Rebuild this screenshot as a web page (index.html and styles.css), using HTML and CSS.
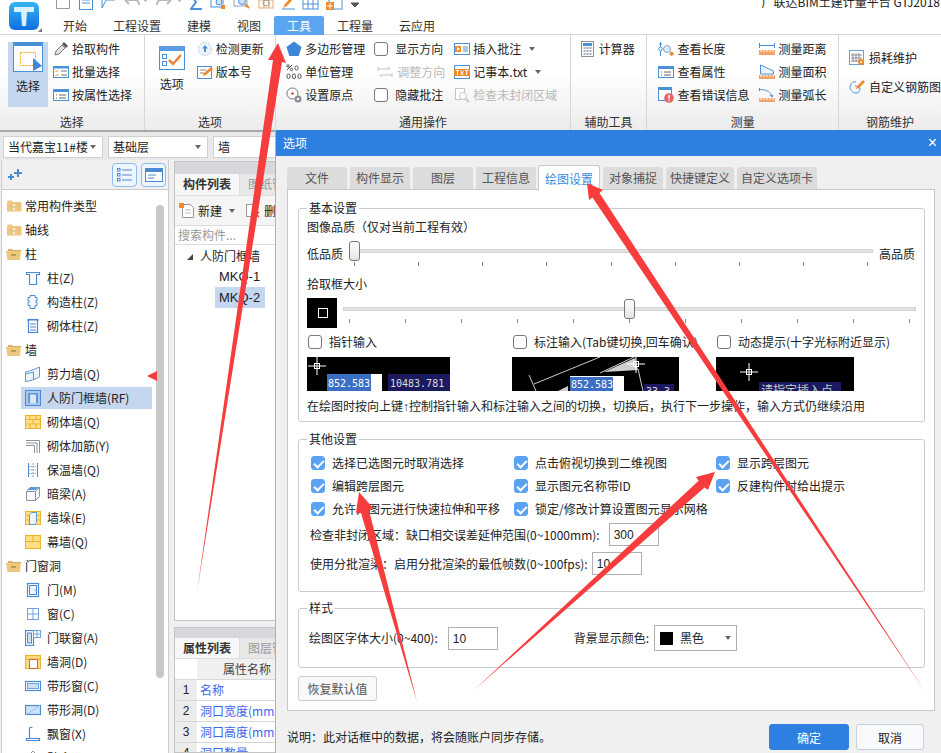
FILE: index.html
```html
<!DOCTYPE html>
<html lang="zh-CN">
<head>
    <meta charset="UTF-8">
    <title>广联达BIM土建计量平台 GTJ2018</title>
    <link rel="stylesheet" href="styles.css">
</head>
<body>
<svg class="defs" xmlns="http://www.w3.org/2000/svg">
    <defs>
        <linearGradient id="logo-g" x1="0" y1="0" x2="0" y2="1">
            <stop offset="0%" stop-color="#35b4f2"></stop>
            <stop offset="100%" stop-color="#0f6fe0"></stop>
        </linearGradient>
        <!-- 功能区小图标 -->
        <symbol id="i-pick" viewBox="0 0 16 16"><path d="M2 14l1-4 6-6 3 3-6 6z" fill="#dfe3e8" stroke="#777"/><path d="M9 3l2-2 4 4-2 2z" fill="#555"/></symbol>
        <symbol id="i-batch" viewBox="0 0 16 16"><rect x=".5" y="2.5" width="15" height="11" fill="#fff" stroke="#4a90d9"/><rect x=".5" y="2.5" width="15" height="2" fill="#4a90d9"/><path d="M2.500 7l1 1 2-2M2.500 11l1 1 2-2" fill="none" stroke="#f08a2c"/><path d="M8 7h6M8 11h6" stroke="#777"/></symbol>
        <symbol id="i-attr" viewBox="0 0 16 16"><rect x=".5" y="2.500" width="15" height="11" fill="#fff" stroke="#4a90d9"/><rect x=".5" y="2.500" width="15" height="2.500" fill="#4a90d9"/><path d="M3 8h1M3 11h1M6 8h7M6 11h7" stroke="#666"/></symbol>
        <symbol id="i-update" viewBox="0 0 16 16"><circle cx="8" cy="8" r="6.500" fill="#eef5fc" stroke="#b5cbe4" stroke-dasharray="2 1"/><path d="M8 4l3 3.500H9V11H7V7.500H5z" fill="#4a90d9"/></symbol>
        <symbol id="i-ver" viewBox="0 0 16 16"><rect x=".5" y="2.500" width="14" height="12" fill="#fff" stroke="#4a90d9"/><path d="M3 6h6M3 9h4" stroke="#888"/><path d="M6 12l1-3 7-6 2 2-7 6z" fill="#f08a2c"/></symbol>
        <symbol id="i-poly" viewBox="0 0 16 16"><path d="M8 .5l7.500 5.500-2.800 9H3.300L.5 6z" fill="#3f85d8"/></symbol>
        <symbol id="i-unit" viewBox="0 0 16 16"><path d="M1 6l5-5" stroke="#555"/><circle cx="2" cy="2" r="1.200" fill="none" stroke="#555"/><circle cx="5.500" cy="5.500" r="1.200" fill="none" stroke="#555"/><rect x="9" y="2" width="3" height="4" rx="1.500" fill="none" stroke="#555"/><rect x="1" y="10" width="3" height="4.500" rx="1.500" fill="none" stroke="#555"/><rect x="6.500" y="10" width="3" height="4.500" rx="1.500" fill="none" stroke="#555"/><rect x="12" y="10" width="3" height="4.500" rx="1.500" fill="none" stroke="#555"/></symbol>
        <symbol id="i-origin" viewBox="0 0 16 16"><circle cx="6.500" cy="6.500" r="5.500" fill="#fff" stroke="#777"/><circle cx="6.500" cy="6.500" r="1.300" fill="#d9443a"/><circle cx="12" cy="12" r="3.500" fill="#8a8f96"/><circle cx="12" cy="12" r="1.300" fill="#fff"/></symbol>
        <symbol id="i-adjust" viewBox="0 0 16 16"><path d="M1 5h12l-2-2M15 11H3l2 2" fill="none" stroke="#c4c4c4"/><path d="M1 3v4M15 9v4" stroke="#c4c4c4"/></symbol>
        <symbol id="i-note" viewBox="0 0 16 16"><rect x=".5" y="2.500" width="15" height="11" fill="#fff" stroke="#4a90d9"/><rect x="1" y="5" width="6" height="6" fill="#f08a2c"/><path d="M3 6l3 2-3 2z" fill="#fff"/><path d="M9 6h5M9 8h5M9 10h5" stroke="#4a90d9"/></symbol>
        <symbol id="i-txt" viewBox="0 0 16 16"><rect x=".5" y="1.500" width="15" height="13" fill="#fff" stroke="#4a90d9"/><rect x="0" y="5" width="16" height="7" fill="#f08a2c"/><path d="M2 6.500h3M3.500 6.500V11M6.500 6.500l3 4.500M9.500 6.500l-3 4.500M11 6.500h3.500M12.700 6.500V11" stroke="#fff"/></symbol>
        <symbol id="i-check-gray" viewBox="0 0 16 16"><rect x="1.500" y="1.500" width="9" height="11" fill="#fff" stroke="#c4c4c4"/><circle cx="9" cy="9" r="3.500" fill="#fff" stroke="#c4c4c4"/><path d="M12 12l3 3" stroke="#c4c4c4" stroke-width="2"/></symbol>
        <symbol id="i-calc" viewBox="0 0 16 16"><rect x="1.500" y=".5" width="12" height="15" fill="#fff" stroke="#8793a3"/><rect x="3" y="2" width="9" height="3" fill="#4a90d9"/><path d="M3.500 7h2M6.500 7h2M9.500 7h2M3.500 10h2M6.500 10h2M9.500 10h2M3.500 13h2M6.500 13h2M9.500 13h2" stroke="#8793a3" stroke-width="1.500"/></symbol>
        <symbol id="i-length" viewBox="0 0 16 16"><circle cx="2.500" cy="8" r="1.800" fill="none" stroke="#4a90d9"/><path d="M2.500 1v5M2.500 10v5M1 3h3" stroke="#4a90d9"/><circle cx="9" cy="8" r="3.500" fill="#dfeaf6" stroke="#8aa8c8"/><path d="M12 11l1 1" stroke="#8aa8c8"/><rect x="12" y="11" width="3.500" height="3.500" fill="#f08a2c" transform="rotate(45 13.700 12.700)"/></symbol>
        <symbol id="i-err" viewBox="0 0 16 16"><rect x=".5" y=".5" width="13" height="13" fill="#fff" stroke="#4a90d9"/><rect x=".5" y=".5" width="13" height="2.500" fill="#4a90d9"/><circle cx="11" cy="11" r="4.800" fill="#e5646a"/><path d="M11 8v3.500M11 12.500v1.200" stroke="#fff" stroke-width="1.500"/></symbol>
        <symbol id="i-dist" viewBox="0 0 16 16"><path d="M.5 2v5M15.500 2v5M1 4.500h14" fill="none" stroke="#4a90d9"/><rect y="9" width="16" height="5" fill="#f3a266"/><path d="M2 9v2M5 9v2M8 9v2M11 9v2M14 9v2" stroke="#fff"/></symbol>
        <symbol id="i-area" viewBox="0 0 16 16"><path d="M1.500 1v9h13V7z" fill="#eef4fb" stroke="#4a90d9"/><rect y="11" width="16" height="4" fill="#f3a266"/><path d="M2 11v2M5 11v2M8 11v2M11 11v2M14 11v2" stroke="#fff"/></symbol>
        <symbol id="i-arc" viewBox="0 0 16 16"><path d="M.5 1v3M1 2.500c7 0 11 3 12 7" fill="none" stroke="#4a90d9"/><path d="M10.500 8l4 .5-1.500 2z" fill="#4a90d9"/><rect y="11" width="16" height="4" fill="#f3a266"/><path d="M2 11v2M5 11v2M8 11v2M11 11v2M14 11v2" stroke="#fff"/></symbol>
        <symbol id="i-loss" viewBox="0 0 16 16"><rect x=".5" y=".5" width="14" height="14" fill="#fff" stroke="#6f9fd2"/><path d="M4 3v9M7 3v9M10 3v9M2 5h11M2 8h11M2 11h11" stroke="#8a8f96"/><circle cx="12" cy="12" r="3" fill="#f08a2c"/><circle cx="12" cy="12" r="1" fill="#fff"/></symbol>
        <symbol id="i-custom" viewBox="0 0 16 16"><path d="M7 3c-3-1-6 2-6 5s3 6 6 6 4-2 4-4-3-3-5-3" fill="none" stroke="#4a90d9"/><path d="M7 10l1-3 6-6 2 2-6 6z" fill="#f08a2c"/></symbol>
        <!-- 构件树图标 -->
        <symbol id="f-plus" viewBox="0 0 16 16"><path d="M1 4c0-1 .5-1.500 1.500-1.500H6l1 1.500h7c1 0 1.500.5 1.500 1.500v8H1z" fill="#eec77f"/><path d="M8 6v6M5 9h6" stroke="#fff" stroke-width="1.500"/><path d="M5 9h6" stroke="#c99a45"/></symbol>
        <symbol id="f-open" viewBox="0 0 16 16"><path d="M2 4c0-1 .5-1 1.500-1H6l1 1h8v2H2z" fill="#d6ad62"/><path d="M0 5h15l-1 9H1.500z" fill="#eec77f"/><path d="M5 9h5" stroke="#b38a3d" stroke-width="1.500"/></symbol>
        <symbol id="t-col" viewBox="0 0 16 16"><path d="M1.500 2.500h13v2h-3v10h-7v-10h-3z" fill="#fff" stroke="#4a8ad4" stroke-width="1.200"/></symbol>
        <symbol id="t-gz" viewBox="0 0 16 16"><path d="M5 1.500h5v2h2v3h-1v2h1v3h-2v3H5v-3H3v-3h1v-2H3v-3h2z" fill="#f5f9fd" stroke="#4a8ad4"/></symbol>
        <symbol id="t-qc" viewBox="0 0 16 16"><rect x="3.500" y="1.500" width="9" height="13" fill="#fff" stroke="#4a8ad4" stroke-width="1.200"/><path d="M2 2h12M5 6h6M5 9h6M5 12h6" stroke="#4a8ad4" stroke-width="1.200"/></symbol>
        <symbol id="t-shear" viewBox="0 0 16 16"><path d="M.5 6c5-1 10-3 14-5v10c-4 2-9 4-14 4.500z" fill="#eef4fb" stroke="#5f97d8"/><path d="M.5 8c3-.5 5-1 8-2v8" fill="none" stroke="#5f97d8"/></symbol>
        <symbol id="t-rf" viewBox="0 0 16 16"><rect x=".5" y=".5" width="15" height="15" fill="#a9c9ee" stroke="#4a8ad4"/><rect x="3" y="3" width="10" height="10" fill="#5f97d8"/><rect x="5" y="4.500" width="6" height="8.500" fill="#d9e6f6"/></symbol>
        <symbol id="t-brick" viewBox="0 0 16 16"><rect x=".5" y="1.500" width="15" height="13" fill="#ffe08a" stroke="#eeb22d"/><path d="M1 5.500h14M1 10h14M5 1.500v4M11 1.500v4M8 5.500V10M5 10v4M11 10v4" stroke="#eeb22d"/></symbol>
        <symbol id="t-rebar" viewBox="0 0 16 16"><path d="M1 2.500h13.500V15M1 5h11v10M1 7.500h8.500V15" fill="none" stroke="#8a939e"/></symbol>
        <symbol id="t-ins" viewBox="0 0 16 16"><path d="M3.500 1v14M12.500 1v14" stroke="#4a8ad4"/><path d="M8 1v14" stroke="#7aa5d8" stroke-dasharray="2 1"/><path d="M4 4.500h8M4 8h8M4 11.500h8" stroke="#7aa5d8" stroke-dasharray="1 1"/></symbol>
        <symbol id="t-beam" viewBox="0 0 16 16"><path d="M1.500 5.500l4-4h9v9l-4 4h-9z" fill="#f5f8fc" stroke="#8a939e"/><path d="M1.500 5.500h9v9M10.500 5.500l4-4" fill="none" stroke="#8a939e"/><path d="M2 4l3.500-3h8.500l-3 3z" fill="#5f97d8"/></symbol>
        <symbol id="t-pier" viewBox="0 0 16 16"><rect x=".5" y="1.500" width="15" height="13" fill="#ffe08a" stroke="#eeb22d"/><path d="M1 5.500h14M1 10h14" stroke="#eeb22d"/><rect x="4.500" y="4.500" width="5" height="10" fill="#eef4fb" stroke="#5f97d8"/><path d="M4.500 4.500l2-2h5v10l-2 2" fill="#eef4fb" stroke="#5f97d8"/></symbol>
        <symbol id="t-curtain" viewBox="0 0 16 16"><rect x=".5" y="1.500" width="15" height="13" fill="#ffe08a" stroke="#eeb22d" stroke-width="1.200"/><path d="M8 1.500v6M1 7.500h14" stroke="#eeb22d" stroke-width="1.200"/></symbol>
        <symbol id="t-door" viewBox="0 0 16 16"><rect x="2.500" y="1.500" width="11" height="13" fill="#fff" stroke="#4a8ad4" stroke-width="1.200"/><rect x="4.500" y="3.500" width="7" height="9" fill="#eef4fb" stroke="#4a8ad4"/><path d="M9.500 8h1" stroke="#4a8ad4"/></symbol>
        <symbol id="t-win" viewBox="0 0 16 16"><rect x="2.500" y="2.500" width="11" height="11" fill="#fff" stroke="#6fa3de"/><path d="M8 2.500v11M2.500 8h11" stroke="#6fa3de"/></symbol>
        <symbol id="t-dw" viewBox="0 0 16 16"><rect x=".5" y=".5" width="8" height="15" fill="#fff" stroke="#4a8ad4" stroke-width="1.200"/><rect x="2.500" y="3" width="4" height="10" fill="#cfe0f5" stroke="#4a8ad4"/><rect x="8.500" y=".5" width="7" height="7" fill="#fff" stroke="#6fa3de"/><path d="M12 .5v7M8.500 4h7" stroke="#6fa3de"/></symbol>
        <symbol id="t-hole" viewBox="0 0 16 16"><rect x=".5" y="1.500" width="15" height="13" fill="#ffd98a" stroke="#eeb22d" stroke-width="1.200"/><path d="M1 5h14" stroke="#eeb22d"/><rect x="4.500" y="5.500" width="8" height="9" fill="#fff" stroke="#d9652e"/></symbol>
        <symbol id="t-sw" viewBox="0 0 16 16"><rect x=".5" y="3.500" width="15" height="9" fill="#fff" stroke="#4a8ad4" stroke-width="1.200"/><rect x="2.500" y="5.500" width="11" height="5" fill="#cfe0f5" stroke="#6fa3de"/></symbol>
        <symbol id="t-sh" viewBox="0 0 16 16"><rect x=".5" y="3.500" width="15" height="9" fill="#cfe0f5" stroke="#4a8ad4" stroke-width="1.200"/><path d="M1 12.500l14-9" stroke="#fff"/><path d="M1 12.500l14-9" stroke="#4a8ad4" stroke-width=".6"/></symbol>
        <symbol id="t-bay" viewBox="0 0 16 16"><path d="M4.500 1.500v11M1.500 12.500h13v2h-13z" fill="none" stroke="#4a8ad4" stroke-width="1.200"/><path d="M4.500 1.500h3" stroke="#4a8ad4"/></symbol>
        <symbol id="t-more" viewBox="0 0 16 16"><path d="M8 1l6 6H2z" fill="none" stroke="#8a939e"/></symbol>
        <!-- 预览里的十字光标 -->
        <symbol id="cross" viewBox="0 0 18 18"><path d="M0 9h18M9 0v18" stroke="#fff"/><rect x="6.500" y="6.500" width="5" height="5" fill="none" stroke="#fff"/></symbol>
    </defs>
</svg>

<div class="app">
    <!-- 顶部标题和页签 -->
    <header class="topbar">
        <div class="logo-box">
            <svg class="logo" viewBox="0 0 30 28" width="30" height="28">
                <rect width="30" height="28" rx="6" fill="url(#logo-g)"></rect>
                <path d="M5 5h20v5h-7l-1 14h-4l-1-14H5z" fill="#d9f0fd"></path>
            </svg>
            <span class="logo-tri"></span>
        </div>
        <div class="topbar-right">
            <div class="quick">
                <svg width="16" height="16" viewBox="0 0 16 16"><path d="M1.500 1.500h11l2 2v11h-13z" fill="#fff" stroke="#999"/><rect x="4" y="1.500" width="7" height="4" fill="#bbb"/></svg>
                <svg width="16" height="16" viewBox="0 0 16 16"><rect x="1.500" y="0" width="13" height="15.500" fill="#fff" stroke="#4a90d9"/><path d="M4 6h8M4 9h8" stroke="#4a90d9"/></svg>
                <svg width="16" height="16" viewBox="0 0 16 16"><path d="M1 1h6l1 2h6v3H5L1 14z" fill="#fff" stroke="#4a90d9"/></svg>
                <svg width="24" height="16" viewBox="0 0 24 16"><path d="M1 6h10c3 0 4 2 4 5M1 6l4-4M1 6l4 4" fill="none" stroke="#bbb" stroke-width="2"/><path d="M19 5h5l-2.500 3z" fill="#aaa"/></svg>
                <svg width="28" height="16" viewBox="0 0 28 16"><path d="M16 6H6c-3 0-4 2-4 5M16 6l-4-4M16 6l-4 4" fill="none" stroke="#bbb" stroke-width="2"/><path d="M22 5h5l-2.500 3z" fill="#aaa"/></svg>
                <svg width="13" height="16" viewBox="0 0 13 16"><path d="M12 1H1l5 7-5 7h11" fill="none" stroke="#4a90d9" stroke-width="2"/></svg>
                <svg width="16" height="16" viewBox="0 0 16 16"><rect x="1" y="0" width="12" height="13" fill="#fff" stroke="#4a90d9"/><circle cx="9" cy="8" r="3" fill="#cfe0f5" stroke="#4a90d9"/><rect x="11" y="11" width="4" height="4" fill="#f08a2c"/></svg>
                <svg width="18" height="16" viewBox="0 0 18 16"><rect x="1" y="0" width="13" height="12" fill="#fff" stroke="#8aa8c8"/><circle cx="9" cy="7" r="3.500" fill="#cfe0f5" stroke="#4a90d9"/><path d="M12 10l4 4" stroke="#f08a2c" stroke-width="2"/></svg>
                <svg width="17" height="16" viewBox="0 0 17 16"><rect x="1" y="1" width="14" height="13" fill="#fff" stroke="#f3a266"/><path d="M6 1v13M11 1v13M1 6h14" stroke="#f3a266"/><circle cx="8" cy="9" r="3" fill="none" stroke="#999"/></svg>
                <svg width="13" height="16" viewBox="0 0 13 16"><path d="M1 14l2-4 8-9 2 2-8 9z" fill="#f08a2c"/><path d="M0 15h13" stroke="#4a90d9"/></svg>
                <svg width="17" height="16" viewBox="0 0 17 16"><rect x="1" y="0" width="15" height="15" fill="#fff" stroke="#4a90d9"/><path d="M6 0v15M11 0v15M1 5h15M1 10h15" stroke="#4a90d9"/></svg>
                <svg width="17" height="16" viewBox="0 0 17 16"><rect x="3" y="0" width="13" height="15" fill="#fff" stroke="#4a90d9"/><rect x="0" y="8" width="8" height="8" fill="#f08a2c"/><path d="M4 9v6M1 12h6" stroke="#fff"/></svg>
                <svg width="10" height="16" viewBox="0 0 10 16"><path d="M1 5h8M1 9h8l-4 4z" fill="#555" stroke="#555"/></svg>
                <span class="app-title">广联达BIM土建计量平台 GTJ2018</span>
            </div>
            <nav class="tabs">
                <span class="tab">开始</span>
                <span class="tab">工程设置</span>
                <span class="tab">建模</span>
                <span class="tab">视图</span>
                <span class="tab active">工具</span>
                <span class="tab">工程量</span>
                <span class="tab">云应用</span>
            </nav>
        </div>
    </header>

    <!-- 功能区 -->
    <section class="ribbon">
        <div class="rgroup g-select">
            <div class="rbody">
                <div class="big-btn selected">
                    <svg width="30" height="30" viewBox="0 0 30 30"><rect x=".5" y=".5" width="29" height="29" fill="#fff" stroke="#4a90d9"/><rect width="30" height="4" fill="#4a90d9"/><rect x="7.500" y="10.500" width="15" height="13" fill="none" stroke="#f5a623" stroke-dasharray="2 1"/><path d="M20 16l9 8-9 5z" fill="#3f85d8"/></svg>
                    <span>选择</span>
                </div>
                <div class="rcol">
                    <div class="ritem"><svg class="ic"><use href="#i-pick"/></svg>拾取构件</div>
                    <div class="ritem"><svg class="ic"><use href="#i-batch"/></svg>批量选择</div>
                    <div class="ritem"><svg class="ic"><use href="#i-attr"/></svg>按属性选择</div>
                </div>
            </div>
            <div class="rlabel">选择</div>
        </div>
        <div class="rgroup g-option">
            <div class="rbody">
                <div class="big-btn option-btn">
                    <svg width="26" height="24" viewBox="0 0 26 24"><rect x=".5" y=".5" width="25" height="23" fill="#fff" stroke="#4a90d9"/><rect width="26" height="5" fill="#5b9be0"/><rect x="3.500" y="8.500" width="4" height="4" fill="none" stroke="#4a90d9"/><rect x="3.500" y="15.500" width="4" height="4" fill="none" stroke="#4a90d9"/><path d="M10 14l4 4 8-9" fill="none" stroke="#e8843a" stroke-width="2.500"/></svg>
                    <span>选项</span>
                </div>
                <div class="rcol">
                    <div class="ritem"><svg class="ic"><use href="#i-update"/></svg>检测更新</div>
                    <div class="ritem"><svg class="ic"><use href="#i-ver"/></svg>版本号</div>
                </div>
            </div>
            <div class="rlabel">选项</div>
        </div>
        <div class="rgroup g-common">
            <div class="rbody">
                <div class="rcol c-a">
                    <div class="ritem"><svg class="ic"><use href="#i-poly"/></svg>多边形管理</div>
                    <div class="ritem"><svg class="ic"><use href="#i-unit"/></svg>单位管理</div>
                    <div class="ritem"><svg class="ic"><use href="#i-origin"/></svg>设置原点</div>
                </div>
                <div class="rcol c-b">
                    <div class="ritem"><span class="box"></span>显示方向</div>
                    <div class="ritem gray"><svg class="ic"><use href="#i-adjust"/></svg>调整方向</div>
                    <div class="ritem"><span class="box"></span>隐藏批注</div>
                </div>
                <div class="rcol c-c">
                    <div class="ritem"><svg class="ic"><use href="#i-note"/></svg>插入批注<i class="caret"></i></div>
                    <div class="ritem"><svg class="ic"><use href="#i-txt"/></svg>记事本.txt<i class="caret"></i></div>
                    <div class="ritem gray"><svg class="ic"><use href="#i-check-gray"/></svg>检查未封闭区域</div>
                </div>
            </div>
            <div class="rlabel">通用操作</div>
        </div>
        <div class="rgroup g-aux">
            <div class="rbody">
                <div class="rcol">
                    <div class="ritem"><svg class="ic"><use href="#i-calc"/></svg>计算器</div>
                </div>
            </div>
            <div class="rlabel">辅助工具</div>
        </div>
        <div class="rgroup g-measure">
            <div class="rbody">
                <div class="rcol c-m">
                    <div class="ritem"><svg class="ic"><use href="#i-length"/></svg>查看长度</div>
                    <div class="ritem"><svg class="ic"><use href="#i-attr"/></svg>查看属性</div>
                    <div class="ritem"><svg class="ic"><use href="#i-err"/></svg>查看错误信息</div>
                </div>
                <div class="rcol">
                    <div class="ritem"><svg class="ic"><use href="#i-dist"/></svg>测量距离</div>
                    <div class="ritem"><svg class="ic"><use href="#i-area"/></svg>测量面积</div>
                    <div class="ritem"><svg class="ic"><use href="#i-arc"/></svg>测量弧长</div>
                </div>
            </div>
            <div class="rlabel">测量</div>
        </div>
        <div class="rgroup g-rebar">
            <div class="rbody">
                <div class="rcol c-r">
                    <div class="ritem"><svg class="ic"><use href="#i-loss"/></svg>损耗维护</div>
                    <div class="ritem"><svg class="ic"><use href="#i-custom"/></svg>自定义钢筋图</div>
                </div>
            </div>
            <div class="rlabel">钢筋维护</div>
        </div>
    </section>

    <!-- 楼层选择 -->
    <div class="floorbar">
        <div class="combo"><span>当代嘉宝11#楼</span><i class="caret"></i></div>
        <div class="combo"><span>基础层</span><i class="caret"></i></div>
        <div class="combo"><span>墙</span></div>
    </div>

    <div class="main">
        <!-- 左侧构件树 -->
        <aside class="side">
            <div class="side-tools">
                <svg class="sparkle" width="14" height="12" viewBox="0 0 14 12"><path d="M9 0h2v3h3v2h-3v3H9V5H6V3h3zM2 5h2v2h2v2H4v2H2V9H0V7h2z" fill="#4a8ad4"/></svg>
                <span class="view-btn"><svg width="16" height="14" viewBox="0 0 16 14"><path d="M5 2h10M5 7h10M5 12h10" stroke="#4a8ad4"/><rect x=".5" y=".5" width="2.500" height="2.500" fill="none" stroke="#4a8ad4"/><rect x=".5" y="5.500" width="2.500" height="2.500" fill="none" stroke="#4a8ad4"/><rect x=".5" y="10.500" width="2.500" height="2.500" fill="none" stroke="#4a8ad4"/></svg></span>
                <span class="view-btn"><svg width="18" height="14" viewBox="0 0 18 14"><rect x=".5" y=".5" width="17" height="13" fill="#fff" stroke="#4a8ad4"/><rect width="18" height="4" fill="#4a8ad4"/><path d="M3 7h8M3 10h6" stroke="#4a8ad4"/></svg></span>
            </div>
            <div class="side-body">
                <ul class="tree">
                    <li><svg class="ic"><use href="#f-plus"/></svg>常用构件类型</li>
                    <li><svg class="ic"><use href="#f-plus"/></svg>轴线</li>
                    <li><svg class="ic"><use href="#f-open"/></svg>柱</li>
                    <li class="sub"><svg class="ic"><use href="#t-col"/></svg>柱(Z)</li>
                    <li class="sub"><svg class="ic"><use href="#t-gz"/></svg>构造柱(Z)</li>
                    <li class="sub"><svg class="ic"><use href="#t-qc"/></svg>砌体柱(Z)</li>
                    <li><svg class="ic"><use href="#f-open"/></svg>墙</li>
                    <li class="sub"><svg class="ic"><use href="#t-shear"/></svg>剪力墙(Q)</li>
                    <li class="sub current"><svg class="ic"><use href="#t-rf"/></svg>人防门框墙(RF)</li>
                    <li class="sub"><svg class="ic"><use href="#t-brick"/></svg>砌体墙(Q)</li>
                    <li class="sub"><svg class="ic"><use href="#t-rebar"/></svg>砌体加筋(Y)</li>
                    <li class="sub"><svg class="ic"><use href="#t-ins"/></svg>保温墙(Q)</li>
                    <li class="sub"><svg class="ic"><use href="#t-beam"/></svg>暗梁(A)</li>
                    <li class="sub"><svg class="ic"><use href="#t-pier"/></svg>墙垛(E)</li>
                    <li class="sub"><svg class="ic"><use href="#t-curtain"/></svg>幕墙(Q)</li>
                    <li><svg class="ic"><use href="#f-open"/></svg>门窗洞</li>
                    <li class="sub"><svg class="ic"><use href="#t-door"/></svg>门(M)</li>
                    <li class="sub"><svg class="ic"><use href="#t-win"/></svg>窗(C)</li>
                    <li class="sub"><svg class="ic"><use href="#t-dw"/></svg>门联窗(A)</li>
                    <li class="sub"><svg class="ic"><use href="#t-hole"/></svg>墙洞(D)</li>
                    <li class="sub"><svg class="ic"><use href="#t-sw"/></svg>带形窗(C)</li>
                    <li class="sub"><svg class="ic"><use href="#t-sh"/></svg>带形洞(D)</li>
                    <li class="sub"><svg class="ic"><use href="#t-bay"/></svg>飘窗(X)</li>
                    <li class="sub"><svg class="ic"><use href="#t-more"/></svg>壁龛(I)</li>
                </ul>
                <div class="scrollbar"></div>
            </div>
        </aside>

        <!-- 中间构件列表和属性列表 -->
        <div class="mid">
            <section class="mid-panel list-panel">
                <div class="strip"></div>
                <div class="ptabs"><span class="ptab on">构件列表</span><span class="ptab">图纸管理</span></div>
                <div class="ptools">
                    <svg class="ic" viewBox="0 0 16 16"><path d="M3.500 1.500h8l3 3v10h-11z" fill="#fff" stroke="#999"/><path d="M6 7h6M6 10h6" stroke="#bbb"/><rect width="5" height="5" fill="#f08a2c"/></svg>
                    <span class="new-label">新建</span><i class="caret"></i>
                    <svg class="ic del-ic" viewBox="0 0 16 16"><rect x="1.500" y="1.500" width="10" height="12" fill="#fff" stroke="#999"/><path d="M9 9l5 5M14 9l-5 5" stroke="#d9443a" stroke-width="1.500"/></svg>
                    <span>删除</span>
                </div>
                <div class="psearch">搜索构件...</div>
                <ul class="comp-tree">
                    <li class="root"><i class="tri"></i>人防门框墙</li>
                    <li class="leaf">MKQ-1</li>
                    <li class="leaf picked">MKQ-2</li>
                </ul>
            </section>
            <section class="mid-panel prop-panel">
                <div class="strip"></div>
                <div class="ptabs"><span class="ptab on">属性列表</span><span class="ptab">图层管理</span></div>
                <div class="prow phead"><span class="pnum"></span><span class="pname">属性名称</span></div>
                <div class="prow"><span class="pnum">1</span><span class="pname blue">名称</span></div>
                <div class="prow"><span class="pnum">2</span><span class="pname blue">洞口宽度(mm)</span></div>
                <div class="prow"><span class="pnum">3</span><span class="pname blue">洞口高度(mm)</span></div>
                <div class="prow"><span class="pnum">4</span><span class="pname blue">洞口数量</span></div>
            </section>
        </div>
    </div>

    <!-- 选项对话框 -->
    <div class="dialog">
        <div class="dlg-title"><span>选项</span><span class="dlg-close">×</span></div>
        <div class="dlg-tabs">
            <span class="dtab t1">文件</span>
            <span class="dtab t2">构件显示</span>
            <span class="dtab t3">图层</span>
            <span class="dtab t4">工程信息</span>
            <span class="dtab t5 on">绘图设置</span>
            <span class="dtab t6">对象捕捉</span>
            <span class="dtab t7">快捷键定义</span>
            <span class="dtab t8">自定义选项卡</span>
        </div>
        <div class="dlg-panel">
            <fieldset class="fs fs-base">
                <legend>基本设置</legend>
                <div class="fs-line">图像品质（仅对当前工程有效）</div>
                <div class="quality">
                    <span>低品质</span>
                    <div class="slider slider-q">
                        <div class="track"></div>
                        <div class="thumb"></div>
                        <div class="ticks"><i></i><i></i><i></i><i></i><i></i><i></i><i></i><i></i><i></i></div>
                    </div>
                    <span>高品质</span>
                </div>
                <div class="fs-line pick-title">拾取框大小</div>
                <div class="pick">
                    <div class="pick-box"><span></span></div>
                    <div class="slider slider-p">
                        <div class="track"></div>
                        <div class="thumb"></div>
                        <div class="ticks"><i></i><i></i><i></i><i></i><i></i><i></i><i></i><i></i><i></i><i></i><i></i></div>
                    </div>
                </div>
                <div class="input-modes">
                    <label class="chk"><span class="box"></span>指针输入</label>
                    <label class="chk"><span class="box"></span>标注输入(Tab键切换,回车确认)</label>
                    <label class="chk"><span class="box"></span>动态提示(十字光标附近显示)</label>
                </div>
                <div class="previews">
                    <svg class="pv1" width="143" height="34" viewBox="0 0 143 34">
                        <rect width="143" height="34"></rect>
                        <use href="#cross" x="1" y="0" width="18" height="18"/>
                        <rect x="20" y="17" width="55" height="17" fill="#fff"></rect>
                        <rect x="20" y="17" width="44" height="17" fill="#3a6fc4"></rect>
                        <text x="21" y="30" class="pv-num">852.583</text>
                        <rect x="81" y="17" width="62" height="17" fill="#1b1a5e"></rect>
                        <text x="83" y="30" class="pv-num dim">10483.781</text>
                    </svg>
                    <svg class="pv2" width="167" height="34" viewBox="0 0 167 34">
                        <rect width="167" height="34"></rect>
                        <path d="M123 1L92 15l34-2zM46 34l10-5v5z" fill="#cfcfcf"></path>
                        <path d="M88 0L22 27M17 18l7 16M122 0l-34 16M126 12l5 22" stroke="#ccc" fill="none"></path>
                        <use href="#cross" x="115" y="-2" width="18" height="18"/>
                        <rect x="58" y="19" width="54" height="15" fill="#fff"></rect>
                        <rect x="58" y="20" width="43" height="14" fill="#3a6fc4"></rect>
                        <text x="59" y="31" class="pv-num">852.583</text>
                        <rect x="132" y="27" width="30" height="7" fill="#1b1a5e"></rect>
                        <text x="134" y="38" class="pv-num dim">33.3</text>
                    </svg>
                    <svg class="pv3" width="138" height="34" viewBox="0 0 138 34">
                        <rect width="138" height="34"></rect>
                        <use href="#cross" x="24" y="6" width="18" height="18"/>
                        <rect x="43" y="25" width="82" height="9" fill="#1b1a5e"></rect>
                        <text x="45" y="38" class="pv-tip">请指定插入点</text>
                    </svg>
                </div>
                <div class="fs-line hint">在绘图时按向上键<span class="arr">↑</span>控制指针输入和标注输入之间的切换，切换后，执行下一步操作，输入方式仍继续沿用</div>
            </fieldset>

            <fieldset class="fs fs-other">
                <legend>其他设置</legend>
                <div class="opts">
                    <label class="chk"><span class="box on"></span>选择已选图元时取消选择</label>
                    <label class="chk"><span class="box on"></span>点击俯视切换到二维视图</label>
                    <label class="chk"><span class="box on"></span>显示跨层图元</label>
                    <label class="chk"><span class="box on"></span>编辑跨层图元</label>
                    <label class="chk"><span class="box on"></span>显示图元名称带ID</label>
                    <label class="chk"><span class="box on"></span>反建构件时给出提示</label>
                    <label class="chk"><span class="box on"></span>允许对图元进行快速拉伸和平移</label>
                    <label class="chk"><span class="box on"></span>锁定/修改计算设置图元显示网格</label>
                </div>
                <div class="num-row nr1">检查非封闭区域：缺口相交误差延伸范围(0~1000mm):<span class="num-input">300</span></div>
                <div class="num-row nr2">使用分批渲染：启用分批渲染的最低帧数(0~100fps):<span class="num-input">10</span></div>
            </fieldset>

            <fieldset class="fs fs-style">
                <legend>样式</legend>
                <div class="style-row">
                    <span>绘图区字体大小(0~400):</span>
                    <span class="num-input">10</span>
                    <span class="bg-label">背景显示颜色:</span>
                    <div class="color-combo"><b></b><span>黑色</span><i class="caret"></i></div>
                </div>
            </fieldset>
            <div class="restore">恢复默认值</div>
        </div>
        <div class="dlg-foot">
            <span class="foot-note">说明：此对话框中的数据，将会随账户同步存储。</span>
            <span class="btn primary">确定</span>
            <span class="btn">取消</span>
        </div>
    </div>

    <!-- 红色标注箭头 -->
    <svg class="marks" width="941" height="753" viewBox="0 0 941 753">
        <path d="M147 376l10-5v10z"></path>
        <path d="M278 43L286 63 282 62 197 592 273 60 268 60z"></path>
        <path d="M587 183L603 190 599.500 193 924 690 592.500 197.500 589 200z"></path>
        <path d="M359 492L373 508 369 510 417 702 361 513 356 513z"></path>
        <path d="M715 472L708 490 704.600 487.400 474 690 698.600 480.800 696 477z"></path>
    </svg>
</div>
</body>
</html>
```

FILE: styles.css
```css
*{
    margin: 0;
    padding: 0;
    box-sizing: border-box;
}
body{
    background-color: #f0f0f0;
    font: 12px/16px "Noto Sans CJK SC", "Liberation Sans", sans-serif;
    color: #222;
    overflow: hidden;
}
ul{
    list-style: none;
}
i{
    font-style: normal;
}
.defs{
    position: absolute;
    width: 0;
    height: 0;
}
.app{
    position: relative;
    width: 941px;
    height: 753px;
    overflow: hidden;
    background-color: #f0f0f0;
}
.ic{
    width: 16px;
    height: 16px;
    flex: none;
}
.caret{
    display: inline-block;
    width: 0;
    height: 0;
    border: 3px solid transparent;
    border-top: 4px solid #666;
    border-bottom: 0;
}

/* 顶部 */
.topbar{
    display: flex;
    height: 35px;
    background-color: #fff;
    border-bottom: 1px solid #d4d4d4;
}
.logo-box{
    position: relative;
    width: 50px;
    padding: 2px 0 0 9px;
}
.logo-tri{
    position: absolute;
    left: 38px;
    top: 28px;
    border: 2px solid transparent;
    border-right-color: #777;
    border-bottom-color: #777;
}
.topbar-right{
    flex: 1;
}
.quick{
    display: flex;
    gap: 7px;
    height: 16px;
    margin-top: -6px;
    padding-left: 5px;
}
.app-title{
    margin-left: auto;
    margin-right: 1px;
    white-space: nowrap;
}
.tabs{
    display: flex;
    margin-top: 6px;
}
.tab{
    height: 19px;
    padding: 1px 13px 0;
    line-height: 18px;
    color: #333;
}
.tab.active{
    background-color: #5aa5f0;
    color: #fff;
    border-radius: 2px 2px 0 0;
}

/* 功能区 */
.ribbon{
    display: flex;
    height: 97px;
    background: linear-gradient(#fff 40%, #ececec);
    border-bottom: 2px solid #a6a8aa;
}
.rgroup{
    display: flex;
    flex-direction: column;
    border-right: 1px solid #d6d6d6;
}
.g-select{ width: 145px; }
.g-option{ width: 132px; }
.g-common{ width: 295px; }
.g-aux{ width: 77px; }
.g-measure{ width: 192px; }
.g-rebar{ flex: 1; border-right: 0; }
.rbody{
    display: flex;
    flex: 1;
    min-height: 0;
    padding-top: 2px;
}
.rlabel{
    height: 22px;
    text-align: center;
    line-height: 28px;
    color: #333;
}
.big-btn{
    display: flex;
    flex-direction: column;
    align-items: center;
    width: 40px;
    height: 65px;
    margin: 5px 0 0 8px;
}
.big-btn span{
    margin-top: 6px;
}
.big-btn.selected{
    background-color: #c5d7ee;
}
.big-btn.option-btn{
    width: 26px;
    height: 60px;
    margin: 9px 0 0 14px;
}
.option-btn span{
    margin-top: 6px;
    white-space: nowrap;
}
.rcol{
    display: flex;
    flex-direction: column;
}
.g-select .rcol{ margin-left: 5px; }
.g-option .rcol{ margin-left: 12px; }
.g-aux .rcol{ margin-left: 9px; }
.ritem{
    display: flex;
    align-items: center;
    gap: 3px;
    height: 23px;
    white-space: nowrap;
}
.ritem .caret{
    margin-left: 5px;
}
.ritem.gray{
    color: #b8b8b8;
}
.c-a{
    width: 88px;
    margin-left: 10px;
}
.c-b{
    width: 80px;
}
.c-b .box{
    margin-right: 4px;
}
.c-b .gray .ic{
    margin: 0 1px 0 3px;
}
.g-measure .rbody{
    padding-left: 11px;
}
.c-m{
    width: 101px;
}
.c-r{
    margin-left: 10px;
    gap: 6px;
    padding-top: 9px;
}
.c-r .ritem{
    gap: 4px;
}

.box{
    display: inline-block;
    flex: none;
    position: relative;
    width: 14px;
    height: 14px;
    background-color: #fff;
    border: 1px solid #777;
    border-radius: 3px;
}
.box.on{
    background-color: #5aa2f2;
    border-color: #5aa2f2;
}
.box.on::after{
    content: "";
    position: absolute;
    left: 4px;
    top: 1px;
    width: 4px;
    height: 8px;
    border: solid #fff;
    border-width: 0 2px 2px 0;
    transform: rotate(45deg);
}

/* 楼层选择 */
.floorbar{
    display: flex;
    gap: 5px;
    height: 28px;
    padding: 4px 0 0 3px;
    background-color: #e8e9eb;
}
.combo{
    display: flex;
    align-items: center;
    justify-content: space-between;
    width: 100px;
    height: 22px;
    padding: 0 6px 0 4px;
    background-color: #fff;
    border: 1px solid #d0d0d0;
}

/* 主体 */
.main{
    display: flex;
    height: 593px;
    gap: 5px;
}
.side{
    flex: none;
    width: 168px;
    margin-left: 1px;
    background-color: #fff;
    border-left: 1px solid #ccc;
    border-right: 1px solid #ccc;
}
.side-tools{
    display: flex;
    align-items: center;
    gap: 4px;
    height: 30px;
    padding: 0 2px 0 6px;
    background-color: #f0f0f0;
    border-bottom: 1px solid #ccc;
}
.sparkle{
    margin-right: auto;
}
.view-btn{
    display: flex;
    align-items: center;
    justify-content: center;
    width: 25px;
    height: 24px;
    background-color: #eef5fd;
    border: 1px solid #8bbcf0;
    border-radius: 4px;
}
.side-body{
    display: flex;
}
.tree{
    flex: none;
    width: 152px;
    padding-top: 3px;
}
.tree li{
    display: flex;
    align-items: center;
    gap: 3px;
    height: 22px;
    margin: 2px 0;
    padding-left: 4px;
    white-space: nowrap;
}
.tree li.sub{
    gap: 6px;
    margin: 2px 2px 2px 19px;
    padding-left: 4px;
}
.tree li.current{
    background-color: #c5d7ee;
}
.scrollbar{
    flex: none;
    width: 8px;
    height: 473px;
    margin: 15px 0 0 2px;
    background-color: #c8c8c8;
    border-radius: 4px;
}
.mid{
    display: flex;
    flex: 1;
    flex-direction: column;
    gap: 6px;
    padding-top: 1px;
}
.mid-panel{
    background-color: #fff;
    border: 1px solid #c4c4c4;
    border-right: 0;
    overflow: hidden;
}
.list-panel{
    height: 460px;
}
.prop-panel{
    flex: 1;
}
.strip{
    height: 12px;
    background-color: #d6d8db;
}
.prop-panel .strip{
    height: 10px;
}
.ptabs{
    display: flex;
    height: 22px;
    background-color: #e8e8e8;
    border-bottom: 1px solid #ddd;
    white-space: nowrap;
}
.prop-panel .ptabs{
    height: 21px;
}
.ptab{
    padding: 2px 8px 0;
    color: #999;
}
.ptab.on{
    width: 65px;
    background-color: #f7f7f7;
    color: #333;
    font-weight: 700;
    border-right: 1px solid #ddd;
}
.ptools{
    display: flex;
    align-items: center;
    height: 29px;
    padding-left: 4px;
    background-color: #f5f5f5;
    white-space: nowrap;
}
.new-label{
    margin: 0 7px 0 3px;
}
.del-ic{
    margin: 0 3px 0 10px;
}
.psearch{
    height: 20px;
    padding: 1px 3px;
    color: #999;
    border-top: 1px solid #ddd;
    border-bottom: 1px solid #ddd;
}
.comp-tree{
    white-space: nowrap;
}
.comp-tree li{
    height: 21px;
    line-height: 21px;
}
.comp-tree .root{
    padding-left: 12px;
}
.tri{
    display: inline-block;
    width: 0;
    height: 0;
    margin-right: 7px;
    vertical-align: 1px;
    border: 3px solid transparent;
    border-right-color: #444;
    border-bottom-color: #444;
}
.comp-tree .leaf{
    width: 50px;
    margin-left: 40px;
    padding-left: 4px;
    font: 13px/21px "Liberation Sans", sans-serif;
}
.comp-tree .picked{
    background-color: #c5d7ee;
}
.phead{
    background-color: #f0f0f0;
}
.prow{
    display: flex;
    height: 21px;
    line-height: 20px;
    border-bottom: 1px solid #d8d8d8;
    white-space: nowrap;
}
.pnum{
    width: 22px;
    text-align: center;
    background-color: #ececec;
    font-family: "Liberation Sans", sans-serif;
    flex: none;
}
.phead .pnum{
    background-color: #fff;
}
.pname{
    padding-left: 3px;
}
.phead .pname{
    padding-left: 26px;
    color: #444;
}
.blue{
    color: #3a66ee;
}

/* 对话框 */
.dialog{
    position: absolute;
    left: 275px;
    top: 130px;
    width: 666px;
    height: 623px;
    background-color: #f0f0f0;
    border-left: 1px solid #a9b3bf;
}
.dlg-title{
    display: flex;
    justify-content: space-between;
    align-items: center;
    height: 26px;
    padding: 0 4px 0 7px;
    background-color: #2d7fe0;
    color: #fff;
}
.dlg-close{
    font-size: 16px;
    font-family: "Liberation Sans", sans-serif;
}
.dlg-tabs{
    display: flex;
    align-items: flex-end;
    height: 33px;
    padding-left: 11px;
}
.dtab{
    height: 22px;
    margin-right: 3px;
    line-height: 22px;
    text-align: center;
    color: #555;
    background-color: #dcdcdc;
    border-radius: 3px 3px 0 0;
    white-space: nowrap;
}
.t1, .t2, .t3, .t4, .t6{ width: 60px; }
.t4{ margin-right: 2px; }
.t5{ width: 62px; }
.t7{ width: 68px; }
.t8{ width: 80px; }
.dtab.on{
    height: 25px;
    line-height: 26px;
    color: #3b8ae0;
    background-color: #fff;
    border: 1px solid #c8c8c8;
    border-bottom: 0;
    position: relative;
    top: 1px;
}
.dlg-panel{
    width: 648px;
    height: 522px;
    margin-left: 11px;
    padding: 0 10px;
    background-color: #fff;
    border: 1px solid #c8c8c8;
}
.fs{
    width: 627px;
    padding: 0 8px;
    border: 1px solid #c8ccd4;
    border-radius: 3px;
    min-width: 0;
}
.fs legend{
    padding: 0 2px;
}
.fs-base{
    margin-top: 10px;
    height: 222px;
}
.fs-line{
    height: 16px;
    white-space: nowrap;
}
.fs-base > .fs-line:first-of-type{
    margin-top: 3px;
}
.quality{
    display: flex;
    align-items: flex-start;
    gap: 6px;
    height: 25px;
    margin-top: 6px;
}
.quality > span{
    margin-top: 5px;
}
.slider{
    position: relative;
}
.slider-q{
    width: 524px;
    height: 25px;
}
.pick-title{
    margin-top: 10px;
}
.pick{
    display: flex;
    gap: 6px;
    margin-top: 6px;
}
.pick-box{
    display: flex;
    align-items: center;
    justify-content: center;
    width: 30px;
    height: 30px;
    background-color: #000;
}
.pick-box span{
    width: 10px;
    height: 10px;
    margin-left: 2px;
    border: 1px solid #fff;
}
.slider-p{
    flex: 1;
    height: 30px;
}
.track{
    position: absolute;
    left: 0;
    right: 0;
    top: 8px;
    height: 4px;
    background-color: #e2e4e4;
    border: 1px solid #d2d4d4;
}
.thumb{
    position: absolute;
    left: 0;
    top: 0;
    width: 11px;
    height: 20px;
    background: linear-gradient(#fff, #e4e4e4);
    border: 1px solid #777;
    border-radius: 3px;
}
.slider-p .thumb{
    left: 281px;
    top: 1px;
}
.slider-p .track{
    top: 9px;
}
.ticks{
    position: absolute;
    left: 5px;
    top: 21px;
    width: 514px;
    display: flex;
    justify-content: space-between;
}
.slider-p .ticks{
    left: 6px;
    width: 561px;
}
.ticks i{
    width: 1px;
    height: 4px;
    background-color: #888;
}
.input-modes{
    display: grid;
    grid-template-columns: 205px 204px 1fr;
    margin-top: 6px;
    padding-left: 1px;
}
.chk{
    display: flex;
    align-items: center;
    gap: 7px;
    height: 16px;
    white-space: nowrap;
}
.previews{
    display: grid;
    grid-template-columns: 205px 204px 1fr;
    margin-top: 7px;
    height: 34px;
}
.previews svg{
    display: block;
    font: 10px "DejaVu Sans Mono", monospace;
}
.pv-num{
    fill: #fff;
}
.pv-num.dim{
    fill: #ddd;
}
.pv-tip{
    fill: #ccc;
    font: 12px "Noto Sans CJK SC", sans-serif;
}
.hint{
    margin-top: 7px;
}
.arr{
    font-family: "Liberation Sans", sans-serif;
}
.fs-other{
    height: 161px;
    margin-top: 9px;
}
.opts{
    display: grid;
    grid-template-columns: 203px 202px 1fr;
    padding: 4px 0 0 4px;
}
.opts .chk{
    height: 23px;
}
.num-row{
    display: flex;
    align-items: center;
    padding-left: 3px;
    height: 23px;
    white-space: nowrap;
}
.nr1{
    margin-top: 3px;
}
.nr2{
    margin-top: 6px;
}
.nr1 .num-input{
    margin-left: 9px;
}
.nr2 .num-input{
    margin-left: 4px;
}
.num-input{
    display: inline-block;
    width: 50px;
    height: 23px;
    padding: 3px 4px;
    background-color: #fff;
    border: 1px solid #b0b0b0;
    font-family: "Liberation Sans", sans-serif;
}
.fs-style{
    height: 68px;
    margin-top: 8px;
}
.style-row{
    display: flex;
    align-items: center;
    gap: 5px;
    height: 26px;
    margin-top: 9px;
    padding-left: 2px;
    white-space: nowrap;
}
.style-row .num-input{
    margin-left: 5px;
}
.bg-label{
    margin-left: 71px;
}
.color-combo{
    display: flex;
    align-items: center;
    gap: 7px;
    width: 83px;
    height: 26px;
    padding: 0 5px;
    background-color: #fff;
    border: 1px solid #b0b0b0;
}
.color-combo b{
    width: 13px;
    height: 13px;
    background-color: #000;
}
.color-combo .caret{
    margin-left: auto;
}
.restore{
    width: 79px;
    height: 25px;
    margin-top: 8px;
    text-align: center;
    line-height: 24px;
    color: #555;
    background-color: #f8f9fa;
    border: 1px solid #c8ccd4;
    border-radius: 3px;
}
.dlg-foot{
    display: flex;
    align-items: center;
    height: 42px;
    padding: 10px 17px 0 11px;
    gap: 7px;
}
.foot-note{
    margin-right: auto;
}
.btn{
    width: 68px;
    height: 26px;
    line-height: 25px;
    text-align: center;
    background-color: #f8f9fa;
    border: 1px solid #c8d0dc;
    border-radius: 3px;
}
.btn.primary{
    width: 80px;
    color: #fff;
    background-color: #2d7fe0;
    border-color: #2d7fe0;
}

/* 标注 */
.marks{
    position: absolute;
    left: 0;
    top: 0;
    pointer-events: none;
}
.marks path{
    fill: #f63c3c;
}
```
